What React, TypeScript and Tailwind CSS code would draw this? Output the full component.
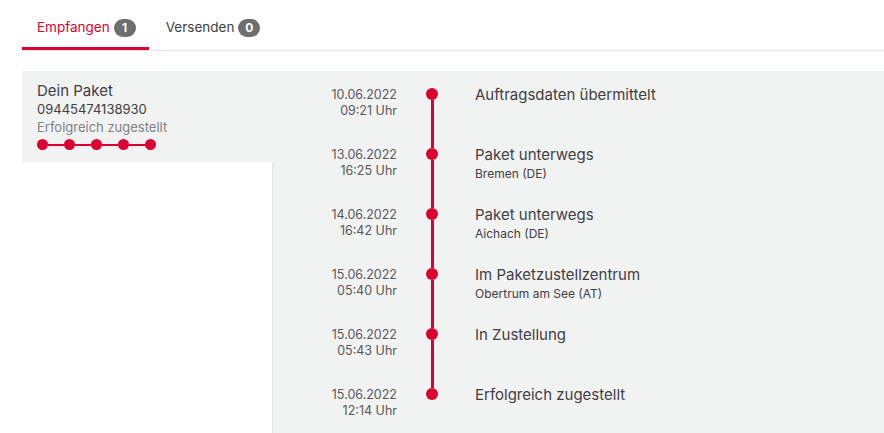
const events = [
  { date: "10.06.2022", time: "09:21 Uhr", title: "Auftragsdaten übermittelt", place: "" },
  { date: "13.06.2022", time: "16:25 Uhr", title: "Paket unterwegs", place: "Bremen (DE)" },
  { date: "14.06.2022", time: "16:42 Uhr", title: "Paket unterwegs", place: "Aichach (DE)" },
  { date: "15.06.2022", time: "05:40 Uhr", title: "Im Paketzustellzentrum", place: "Obertrum am See (AT)" },
  { date: "15.06.2022", time: "05:43 Uhr", title: "In Zustellung", place: "" },
  { date: "15.06.2022", time: "12:14 Uhr", title: "Erfolgreich zugestellt", place: "" },
];

const Badge = ({ n }: { n: number }) => (
  <span className="ml-[4px] inline-flex h-[18px] min-w-[22px] items-center justify-center rounded-full bg-[#6e6e6e] px-[6px] text-[12px] font-bold leading-none text-white">
    {n}
  </span>
);

export default function App() {
  return (
    <div className="h-[433px] overflow-hidden bg-white pl-[22px] text-[#414042]" style={{ fontFamily: "Inter, 'Open Sans', sans-serif" }}>
      {/* Tabs */}
      <div className="flex h-[51px] border-b border-[#e6e6e6]">
        <div className="flex items-center border-b-[3px] border-[#dc0032] pl-[15px] pr-[13px] pt-[8px] text-[13.5px] text-[#dc0032]">
          Empfangen
          <Badge n={1} />
        </div>
        <div className="flex items-center pl-[17px] pt-[5px] text-[13.5px] text-[#414042]">
          Versenden
          <Badge n={0} />
        </div>
      </div>

      <div className="mt-[20px] flex">
        {/* Left column */}
        <div className="flex w-[251px] flex-col">
          <div className="h-[91px] bg-[#f1f2f2] px-[15px] pt-[10px]">
            <div className="text-[15px] leading-[20px]">Dein Paket</div>
            <div className="text-[13px] leading-[17px]">09445474138930</div>
            <div className="text-[13px] leading-[19px] text-[#808285]">Erfolgreich zugestellt</div>
            <div className="mt-[2px] flex items-center">
              {[0, 1, 2, 3, 4].map((i) => (
                <div key={i} className="flex items-center">
                  {i > 0 && <div className="h-[2px] w-[16px] bg-[#dc0032]" />}
                  <div className="h-[11px] w-[11px] rounded-full bg-[#dc0032]" />
                </div>
              ))}
            </div>
          </div>
          <div className="flex-1 border-r border-[#e2e3e3]" />
        </div>

        {/* Timeline panel */}
        <div className="flex-1 bg-[#f1f2f2] pb-[2px]">
          {events.map((e, i) => (
            <div key={i} className="flex h-[60px]">
              <div className="w-[124px] pt-[16px] text-right text-[12.5px] leading-[16px] text-[#58585a]">
                <div>{e.date}</div>
                <div>{e.time}</div>
              </div>
              <div className="flex w-[70px] flex-col items-center">
                <div className={`h-[17px] w-[3px] ${i > 0 ? "bg-[#dc0032]" : ""}`} />
                <div className="h-[12px] w-[12px] shrink-0 rounded-full bg-[#dc0032]" />
                <div className={`w-[3px] flex-1 ${i < events.length - 1 ? "bg-[#dc0032]" : ""}`} />
              </div>
              <div className="pl-[8px] pt-[14px]">
                <div className="text-[15px] leading-[20px]">{e.title}</div>
                {e.place && <div className="mt-[1px] text-[12px] leading-[16px]">{e.place}</div>}
              </div>
            </div>
          ))}
        </div>
      </div>
    </div>
  );
}
